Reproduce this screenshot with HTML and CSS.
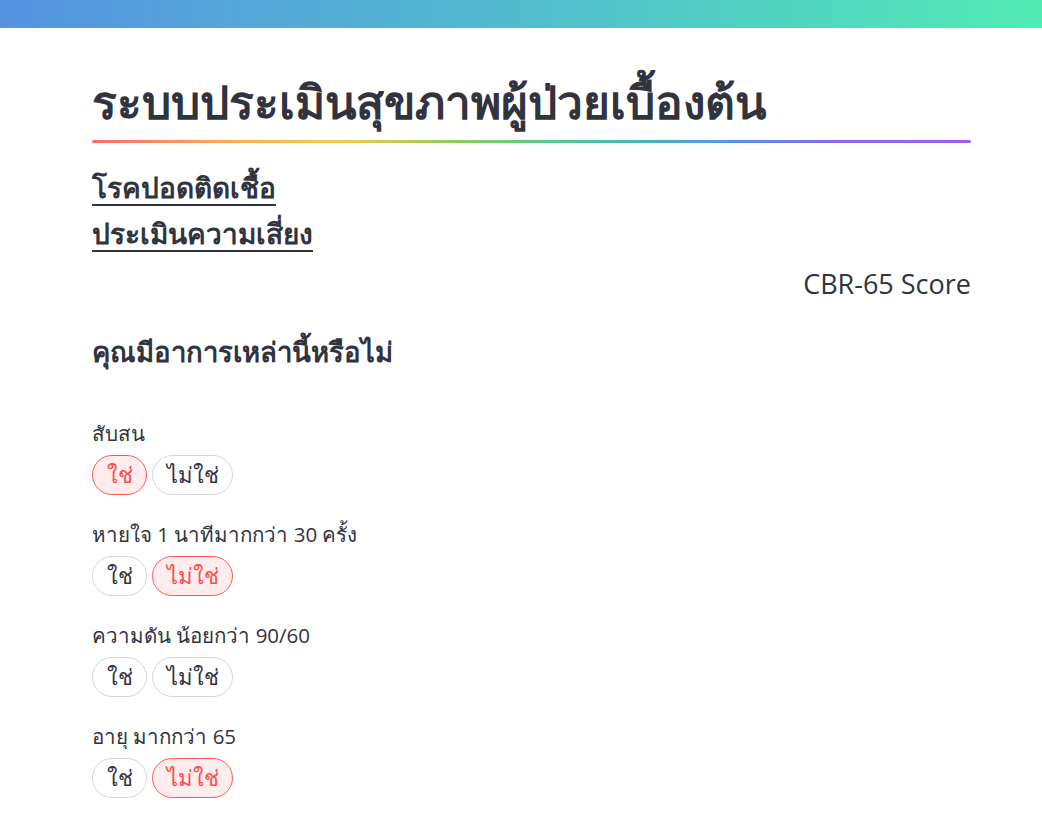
FILE: index.html
```html
<!DOCTYPE html>
<html lang="th">
<head>
<meta charset="utf-8">
<link rel="stylesheet" href="styles.css">
</head>
<body>
<div class="topbar"></div>
<main class="main">
  <h1 class="title">ระบบประเมินสุขภาพผู้ป่วยเบื้องต้น</h1>
  <hr class="rainbow">
  <h3 class="sub"><u>โรคปอดติดเชื้อ</u></h3>
  <h3 class="sub"><u>ประเมินความเสี่ยง</u></h3>
  <p class="score">CBR-65 Score</p>
  <h4 class="question">คุณมีอาการเหล่านี้หรือไม่</h4>
  <div class="fields">
    <div class="field">
      <label class="label">สับสน</label>
      <div class="pills">
        <button class="pill active">ใช่</button>
        <button class="pill">ไม่ใช่</button>
      </div>
    </div>
    <div class="field">
      <label class="label">หายใจ 1 นาทีมากกว่า 30 ครั้ง</label>
      <div class="pills">
        <button class="pill">ใช่</button>
        <button class="pill active">ไม่ใช่</button>
      </div>
    </div>
    <div class="field">
      <label class="label">ความดัน น้อยกว่า 90/60</label>
      <div class="pills">
        <button class="pill">ใช่</button>
        <button class="pill">ไม่ใช่</button>
      </div>
    </div>
    <div class="field">
      <label class="label">อายุ มากกว่า 65</label>
      <div class="pills">
        <button class="pill">ใช่</button>
        <button class="pill active">ไม่ใช่</button>
      </div>
    </div>
  </div>
</main>
</body>
</html>
```
FILE: styles.css
```css
* { box-sizing: border-box; }
html, body { margin: 0; padding: 0; background: #fff; }
body {
  font-family: "Open Sans", "Noto Sans", "DejaVu Sans", sans-serif;
  color: #31333f;
  overflow: hidden;
}
.topbar {
  height: 28px;
  background: linear-gradient(90deg, #5593e1 0%, #52bcce 50%, #52ebb4 100%);
}
.main {
  width: 879px;
  margin-left: 92px;
  padding-top: 44px;
}
.title {
  margin: 0;
  font-size: 46px;
  font-weight: 700;
  line-height: 58px;
}
.rainbow {
  margin: 10px 0 24px;
  border: 0;
  height: 3px;
  border-radius: 2px;
  background: linear-gradient(90deg, #f86a6a, #f9ac50, #f5c84a, #7fcf5f, #44c5a6, #4d9be6, #8e63f0, #9c5ff0);
}
.sub {
  margin: 0 0 6px;
  font-size: 28px;
  font-weight: 700;
  line-height: 40px;
}
.sub u { text-decoration-thickness: 2px; text-underline-offset: 6px; }
.score {
  margin: 11px 0 0;
  text-align: right;
  font-size: 27px;
  line-height: 40px;
}
.question {
  margin: 28px 0 0;
  font-size: 27.5px;
  font-weight: 600;
  line-height: 40px;
}
.fields {
  margin-top: 45px;
  display: flex;
  flex-direction: column;
  gap: 23px;
}
.field { display: flex; flex-direction: column; gap: 6px; }
.label { font-size: 20.5px; line-height: 32px; }
.pills { display: flex; gap: 5px; }
.pill {
  font-family: inherit;
  font-size: 22px;
  color: #31333f;
  background: #fff;
  border: 1px solid #d6d6d9;
  border-radius: 999px;
  height: 40px;
  padding: 0 13.5px;
}
.pill.active {
  color: #ff4b4b;
  background: #ffeced;
  border-color: #ff5a5a;
}
```
